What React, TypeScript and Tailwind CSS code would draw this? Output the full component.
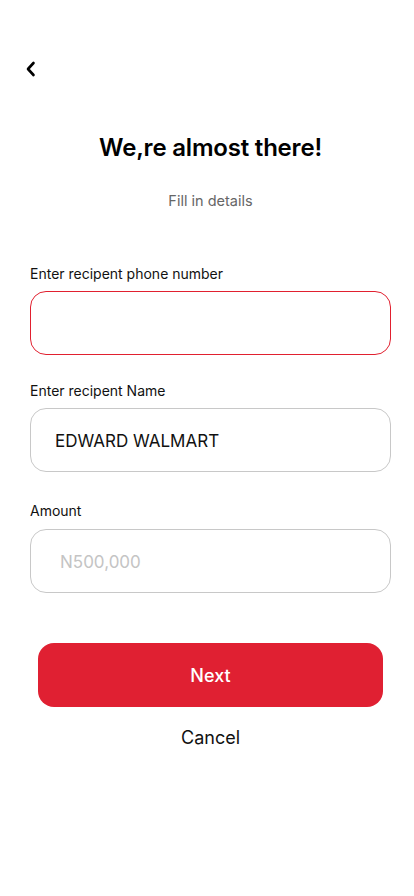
import React from "react";

export default function App() {
  return (
    <div className="min-h-[896px] w-full overflow-hidden bg-white font-['Inter',sans-serif] text-black">
      <div className="w-[421px]">
        <div className="pl-[25px] pt-[61px]">
          <svg width="12" height="16" viewBox="0 0 12 16" fill="none">
            <path d="M8.5 2 L3 8 L8.5 14" stroke="#000" strokeWidth="2.6" strokeLinecap="round" strokeLinejoin="round" />
          </svg>
        </div>
        <h1 className="mt-[56px] text-center text-[24px] font-semibold leading-[30px] tracking-[-0.2px]">We,re almost there!</h1>
        <p className="mt-[28px] text-center text-[14.5px] leading-[20px] text-[#666]">Fill in details</p>

        <div className="mt-[53px] flex flex-col px-[30px]">
          <label className="text-[14px] leading-[20px] text-[#111]">Enter recipent phone number</label>
          <div className="mt-[7px] h-[64px] rounded-[16px] border border-[#e1202f]"></div>

          <label className="mt-[26px] text-[14px] leading-[20px] text-[#111]">Enter recipent Name</label>
          <div className="mt-[7px] flex h-[64px] items-center rounded-[16px] border border-[#c8c8c8] pl-[24px] pt-[3px] text-[17px] text-[#111]">
            EDWARD WALMART
          </div>

          <label className="mt-[29px] text-[14px] leading-[20px] text-[#111]">Amount</label>
          <div className="mt-[8px] flex h-[64px] items-center rounded-[16px] border border-[#c8c8c8] pl-[29px] pt-[3px] text-[17px] text-[#c4c4c4]">
            N500,000
          </div>
        </div>

        <div className="mt-[50px] px-[38px]">
          <button className="flex h-[64px] w-full items-center justify-center rounded-[16px] bg-[#e02032] text-[18px] font-medium text-white">
            Next
          </button>
        </div>
        <p className="mt-[19px] text-center text-[18px] leading-[24px] text-[#111]">Cancel</p>
      </div>
    </div>
  );
}
